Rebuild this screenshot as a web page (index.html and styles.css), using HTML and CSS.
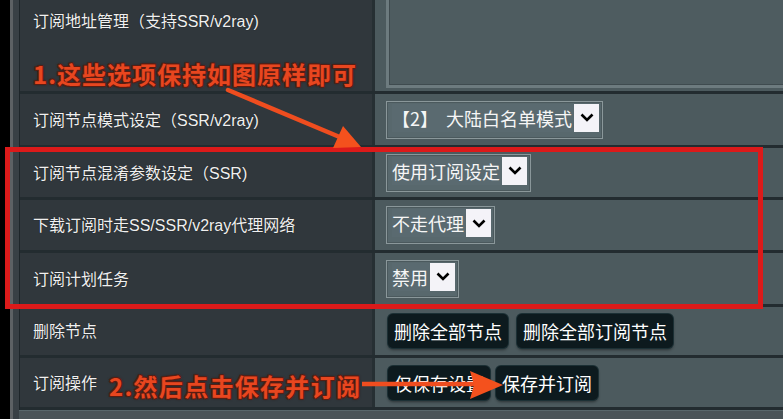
FILE: index.html
```html
<!DOCTYPE html>
<html lang="zh-CN">
<head>
<meta charset="utf-8">
<title>订阅设置</title>
<link rel="stylesheet" href="styles.css">
</head>
<body>
<div class="screen">
  <div class="panel">
    <div class="table">
      <div class="row r1">
        <div class="label top">订阅地址管理（支持SSR/v2ray)</div>
        <div class="value top"><div class="textarea"></div></div>
      </div>
      <div class="row r2">
        <div class="label">订阅节点模式设定（SSR/v2ray)</div>
        <div class="value">
          <div class="select"><span class="sel-text">【2】&nbsp; 大陆白名单模式</span><span class="sel-arrow"><svg width="14" height="9" viewBox="0 0 14 9"><path d="M1.5 1.5 L7 7 L12.5 1.5" fill="none" stroke="#000" stroke-width="2.6"/></svg></span></div>
        </div>
      </div>
      <div class="row r3">
        <div class="label">订阅节点混淆参数设定（SSR)</div>
        <div class="value">
          <div class="select"><span class="sel-text">使用订阅设定</span><span class="sel-arrow"><svg width="14" height="9" viewBox="0 0 14 9"><path d="M1.5 1.5 L7 7 L12.5 1.5" fill="none" stroke="#000" stroke-width="2.6"/></svg></span></div>
        </div>
      </div>
      <div class="row r4">
        <div class="label">下载订阅时走SS/SSR/v2ray代理网络</div>
        <div class="value">
          <div class="select"><span class="sel-text">不走代理</span><span class="sel-arrow"><svg width="14" height="9" viewBox="0 0 14 9"><path d="M1.5 1.5 L7 7 L12.5 1.5" fill="none" stroke="#000" stroke-width="2.6"/></svg></span></div>
        </div>
      </div>
      <div class="row r5">
        <div class="label">订阅计划任务</div>
        <div class="value">
          <div class="select"><span class="sel-text">禁用</span><span class="sel-arrow"><svg width="14" height="9" viewBox="0 0 14 9"><path d="M1.5 1.5 L7 7 L12.5 1.5" fill="none" stroke="#000" stroke-width="2.6"/></svg></span></div>
        </div>
      </div>
      <div class="row r6">
        <div class="label">删除节点</div>
        <div class="value">
          <div class="btns"><button class="btn">删除全部节点</button><button class="btn">删除全部订阅节点</button></div>
        </div>
      </div>
      <div class="row r7">
        <div class="label">订阅操作</div>
        <div class="value">
          <div class="btns tight"><button class="btn">仅保存设置</button><button class="btn">保存并订阅</button></div>
        </div>
      </div>
    </div>
    <div class="footer"></div>
  </div>

  <div class="highlight"></div>
  <div class="note note1">1.这些选项保持如图原样即可</div>
  <div class="note note2">2.然后点击保存并订阅</div>
  <svg class="arrows" width="783" height="419" viewBox="0 0 783 419">
    <line x1="228" y1="90" x2="342" y2="138" stroke="#ef4d1f" stroke-width="4.5" stroke-linecap="round"/>
    <polygon points="361,147 333,148 343,126" fill="#f4511d"/>
    <line x1="362" y1="384" x2="478" y2="384" stroke="#ef4d1f" stroke-width="4.5"/>
    <polygon points="503,385 470,371 474,385 470,399" fill="#f4511d"/>
  </svg>
</div>
</body>
</html>
```

FILE: styles.css
```css
* { box-sizing: border-box; margin: 0; padding: 0; }
html, body { width: 783px; height: 419px; overflow: hidden; background: #000; }
body { font-family: "Liberation Sans", "Noto Sans CJK SC", sans-serif; }

.screen { position: relative; width: 783px; height: 419px; }

.panel {
  margin-left: 10px;
  height: 100%;
  border-left: 3px solid #5d6164;
  background: #394045;
  padding-left: 6px;
  display: flex;
  flex-direction: column;
}

.table { border-left: 1px solid #1e2529; }

.row {
  display: grid;
  grid-template-columns: 352px 1fr;
  border-bottom: 3px solid #232c30;
}
.r1 { height: 94px; }
.r2 { height: 54px; }
.r3 { height: 52px; }
.r4 { height: 53px; }
.r5 { height: 54px; }
.r6 { height: 51px; }
.r7 { height: 52px; }

.label {
  background: #30373c;
  color: #f0f0f0;
  font-size: 16px;
  line-height: 20px;
  padding-left: 13px;
  padding-top: 2px;
  display: flex;
  align-items: center;
  text-shadow: 0 0 1px #111;
}
.label.top { align-items: flex-start; padding-top: 12px; }

.value {
  background: #4c5a5e;
  border-left: 3px solid #262f33;
  padding-left: 11px;
  display: flex;
  align-items: center;
}
.value.top { align-items: flex-start; }

.textarea {
  flex: 1;
  height: 88px;
  background: #4e5c60;
  border-left: 3px solid #6d7b7f;
  border-bottom: 3px solid #6d7b7f;
  box-shadow: inset 1px -1px 0 #3f4b4f;
}

.select {
  display: inline-flex;
  align-items: stretch;
  border: 1px solid #8a979a;
  background: #58686d;
  padding: 2px 3px 6px 5px;
  box-shadow: inset 0 0 0 1px #4b595d;
}
.sel-text {
  color: #f6f6f6;
  font-family: "Noto Sans CJK SC", sans-serif;
  font-size: 18px;
  line-height: 28px;
  padding-right: 2px;
  background: #5a6a70;
}
.sel-arrow {
  width: 25px;
  height: 28px;
  background: #f4f3f8;
  display: flex;
  align-items: center;
  justify-content: center;
}

.btns { display: flex; gap: 9px; margin-left: 2px; }
.btns.tight { gap: 6px; }
.btn {
  background: #0d1a1e;
  color: #fff;
  border: none;
  font-family: "Noto Sans CJK SC", sans-serif;
  font-size: 18px;
  line-height: 34px;
  height: 34px;
  padding: 0 6px;
  border-radius: 5px;
  box-shadow: 0 0 0 1px #1c3035, 0 2px 3px rgba(0,0,0,.45);
}

.footer {
  flex: 1;
  background: #4a5458;
  border-top: 1px solid #58676b;
}

.highlight {
  position: absolute;
  left: 5px;
  top: 147px;
  width: 758px;
  height: 162px;
  border: 5px solid #dc1a1a;
}

.note {
  position: absolute;
  font-family: "Noto Sans CJK SC", sans-serif;
  font-weight: 700;
  color: #e8461f;
  line-height: 30px;
  white-space: nowrap;
  text-shadow:
    -1px -1px 0 #5a1d12, 1px -1px 0 #5a1d12,
    -1px 1px 0 #5a1d12, 1px 1px 0 #5a1d12,
    0 0 3px #2a0c06;
}
.note1 { left: 33px; top: 59px; font-size: 24px; letter-spacing: 1px; }
.note2 { left: 109px; top: 371px; font-size: 24px; letter-spacing: 1.3px; }

.arrows { position: absolute; left: 0; top: 0; pointer-events: none; }
```
